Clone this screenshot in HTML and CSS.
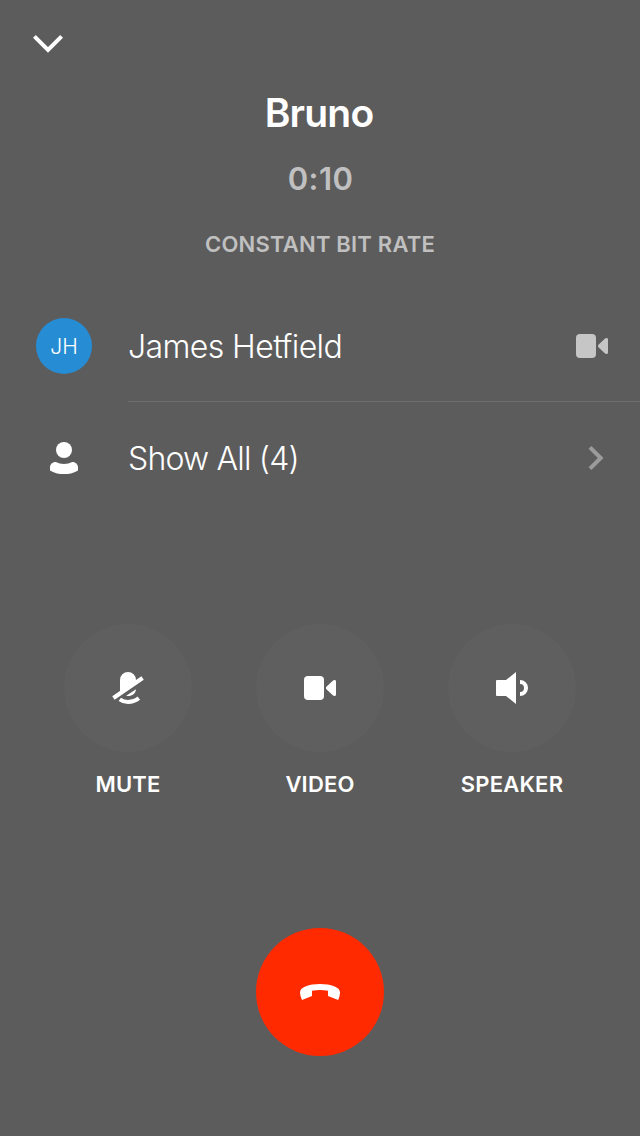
FILE: index.html
```html
<!DOCTYPE html>
<html lang="en">
<head>
<meta charset="utf-8">
<title>Call with Bruno</title>
<link rel="stylesheet" href="styles.css">
</head>
<body>
<main class="call">
  <header class="top">
    <button class="minimize" aria-label="Minimize">
      <svg width="32" height="32" viewBox="0 0 32 32"><path d="M2.4 8.4 16 22 29.6 8.4" fill="none" stroke="#fff" stroke-width="4"/></svg>
    </button>
  </header>
  <section class="info">
    <h1 class="name">Bruno</h1>
    <p class="timer">0:10</p>
    <p class="bitrate">CONSTANT BIT RATE</p>
  </section>
  <section class="people">
    <div class="row">
      <div class="lead"><span class="avatar">JH</span></div>
      <div class="body divided">
        <span class="label">James Hetfield</span>
        <svg width="32" height="32" viewBox="0 0 32 32" fill="#c6c6c6"><rect y="4" width="20" height="24" rx="4"/><path d="M22.4 14.8 28.8 8.7Q30 7.8 31 8.1 32 8.4 32 9.6V22.4Q32 23.6 31 23.9 30 24.2 28.8 23.3L22.4 17.2Q21.4 16 22.4 14.8Z"/></svg>
      </div>
    </div>
    <div class="row">
      <div class="lead"><svg width="32" height="32" viewBox="0 0 32 32" fill="#fff"><circle cx="16" cy="8" r="8"/><path d="M7.8 20Q11.5 22 16 22T24.2 20C27.4 19.8 30 22.4 30 25.4V28.4Q24.5 32 16 32T2 28.4V25.4C2 22.4 4.6 19.8 7.8 20Z"/></svg></div>
      <div class="body">
        <span class="label show-all">Show All (4)</span>
        <svg class="next" width="16" height="26" viewBox="0 0 16 26"><path d="M2 2.3 12.7 13 2 23.7" fill="none" stroke="#9b9b9b" stroke-width="4"/></svg>
      </div>
    </div>
  </section>
  <section class="controls">
    <div class="control">
      <button class="circle" aria-label="Mute"><svg width="32" height="32" viewBox="0 0 32 32" fill="#fff"><path d="M8 22V8a8 8 0 0 1 16 0V11ZM24 17.2C23.6 21.5 20.5 24 16 24Q15 24 14.2 23.8Z"/><path d="M1.4 26 30.6 6.1" fill="none" stroke="#fff" stroke-width="4.2"/><path d="M7.8 27.3Q11.5 30 16 30 22.5 29.7 26.8 26.1" fill="none" stroke="#fff" stroke-width="4"/></svg></button>
      <span class="caption">MUTE</span>
    </div>
    <div class="control">
      <button class="circle" aria-label="Video"><svg width="32" height="32" viewBox="0 0 32 32" fill="#fff"><rect y="4" width="20" height="24" rx="4"/><path d="M22.4 14.8 28.8 8.7Q30 7.8 31 8.1 32 8.4 32 9.6V22.4Q32 23.6 31 23.9 30 24.2 28.8 23.3L22.4 17.2Q21.4 16 22.4 14.8Z"/></svg></button>
      <span class="caption">VIDEO</span>
    </div>
    <div class="control">
      <button class="circle" aria-label="Speaker"><svg width="32" height="32" viewBox="0 0 32 32" fill="#fff"><path d="M1 8H10L20 0V32L10 24H1Q0 24 0 23V9Q0 8 1 8ZM24 8a8 8 0 0 1 0 16V20a4 4 0 0 0 0-8Z"/></svg></button>
      <span class="caption">SPEAKER</span>
    </div>
  </section>
  <footer class="end">
    <button class="circle hangup" aria-label="End call"><svg width="40" height="16" viewBox="0 0 40 16" fill="#fff"><path d="M2 16Q0 12 0 8.5C0 3 9 0 20 0S40 3 40 8.5Q40 12 38.2 16L28 12V6.8Q24.5 6 20 6T12 6.8V12Z"/></svg></button>
  </footer>
</main>
</body>
</html>
```
FILE: styles.css
```css
* { box-sizing: border-box; }
body { margin: 0; background: #5c5c5c; color: #fff; font-family: Inter, "Liberation Sans", sans-serif; font-variant-ligatures: none; }
button { border: 0; padding: 0; background: none; color: inherit; }
svg { display: block; flex: none; }
h1, p { margin: 0; }
.call { width: 640px; height: 1136px; display: flex; flex-direction: column; }
.top { height: 88px; padding: 28px 32px; }
.minimize { display: block; }
.info { height: 202px; text-align: center; }
.name { height: 48px; padding-right: 2px; font-size: 39px; line-height: 49px; font-weight: 600; letter-spacing: -0.8px; }
.timer { margin-top: 23px; height: 40px; padding-left: 1px; font-size: 31px; line-height: 40px; font-weight: 600; letter-spacing: 0.4px; color: #c0c0c0; }
.bitrate { margin-top: 31px; height: 28px; font-size: 22px; line-height: 28px; font-weight: 600; letter-spacing: 0.2px; color: #c0c0c0; }
.row { display: flex; height: 112px; }
.lead { width: 128px; display: flex; align-items: center; justify-content: center; }
.avatar { width: 56px; height: 56px; border-radius: 50%; background: #268dd5; font-size: 21px; line-height: 57px; font-weight: 300; text-align: center; }
.body { flex: 1; display: flex; align-items: center; justify-content: space-between; padding-right: 32px; }
.divided { box-shadow: inset 0 -1px #6c6c6c; }
.label { padding-top: 2px; font-size: 32px; line-height: 40px; font-weight: 300; letter-spacing: -0.6px; }
.show-all { letter-spacing: -0.8px; }
.next { margin-right: 4px; }
.controls { display: flex; gap: 64px; padding: 110px 64px 0; }
.control { width: 128px; display: flex; flex-direction: column; align-items: center; }
.circle { width: 128px; height: 128px; border-radius: 50%; background: #5f5f5f; display: flex; align-items: center; justify-content: center; }
.caption { margin-top: 18px; font-size: 22px; line-height: 28px; font-weight: 600; letter-spacing: 0.2px; }
.end { margin-top: 130px; display: flex; justify-content: center; }
.hangup { background: #ff2a00; }
```
